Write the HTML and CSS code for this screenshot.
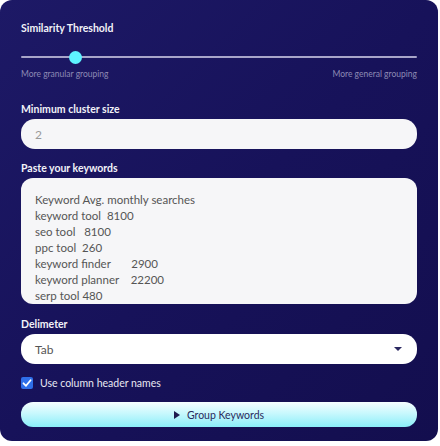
FILE: index.html
```html
<!DOCTYPE html>
<html>
<head>
<meta charset="utf-8">
<link rel="stylesheet" href="styles.css">
</head>
<body>
<div class="card">
  <div class="field">
    <div class="label">Similarity Threshold</div>
    <div class="slider">
      <div class="track"></div>
      <div class="thumb"></div>
    </div>
    <div class="hints"><span>More granular grouping</span><span>More general grouping</span></div>
  </div>
  <div class="field">
    <div class="label">Minimum cluster size</div>
    <div class="input placeholder">2</div>
  </div>
  <div class="field">
    <div class="label">Paste your keywords</div>
    <div class="textarea">
      <div>Keyword Avg. monthly searches</div>
      <div>keyword tool&nbsp; 8100</div>
      <div>seo tool&nbsp;&nbsp; 8100</div>
      <div>ppc tool&nbsp; 260</div>
      <div>keyword finder&nbsp;&nbsp;&nbsp;&nbsp;&nbsp;&nbsp; 2900</div>
      <div>keyword planner&nbsp;&nbsp;&nbsp; 22200</div>
      <div>serp tool 480</div>
    </div>
  </div>
  <div class="field">
    <div class="label">Delimeter</div>
    <div class="input select"><span>Tab</span><span class="caret"></span></div>
  </div>
  <div class="check-row">
    <span class="checkbox"><svg width="12" height="12" viewBox="0 0 12 12"><path d="M2.5 6.3 L5 8.8 L9.6 3.2" fill="none" stroke="#fff" stroke-width="1.8" stroke-linecap="round" stroke-linejoin="round"/></svg></span>
    <span class="check-label">Use column header names</span>
  </div>
  <div class="button"><span class="play"></span>Group Keywords</div>
</div>
</body>
</html>
```
FILE: styles.css
```css
html, body { margin: 0; padding: 0; background: #fff; }
body { font-family: "Lato", "Noto Sans", sans-serif; }
.card {
  width: 438px;
  height: 441px;
  box-sizing: border-box;
  border-radius: 12px;
  background: linear-gradient(135deg, #1d1966 0%, #17125a 50%, #130e4e 100%);
  padding: 21px 21px 0 21px;
  display: flex;
  flex-direction: column;
}
.label {
  color: #f2f2f8;
  font-size: 10.5px;
  font-weight: 700;
  line-height: 14px;
  margin-bottom: 3px;
}
.field { display: flex; flex-direction: column; }
.slider { position: relative; height: 20px; margin-top: 8px; }
.track {
  position: absolute; left: 0; right: 0; top: 10px;
  height: 2px; background: #a8a5c9; border-radius: 1px;
}
.thumb {
  position: absolute; left: 48px; top: 4.5px;
  width: 13px; height: 13px; border-radius: 50%;
  background: #5ef2ff;
}
.hints {
  display: flex; justify-content: space-between;
  color: #8d8ab4; font-size: 8.5px; line-height: 12px;
  margin-top: 2px; margin-bottom: 22px;
}
.input {
  height: 30px;
  border-radius: 14px;
  background: #f6f6f8;
  box-sizing: border-box;
  padding: 0 14px;
  display: flex; align-items: center;
  font-size: 12px;
  color: #555;
  margin-bottom: 12px;
}
.placeholder { color: #9a9a9a; }
.textarea {
  height: 126px;
  border-radius: 12px;
  background: #f6f6f8;
  box-sizing: border-box;
  padding: 14px 14px 0 14px;
  font-size: 11.5px;
  line-height: 16px;
  color: #555;
  overflow: hidden;
  margin-bottom: 13px;
}
.select { background: #fff; justify-content: space-between; padding-right: 14px; color: #555; margin-bottom: 12px; }
.caret {
  width: 0; height: 0;
  border-left: 4px solid transparent;
  border-right: 4px solid transparent;
  border-top: 4px solid #2a2760;
  margin-right: 1px;
}
.check-row { display: flex; align-items: center; height: 14px; margin-bottom: 12px; }
.checkbox {
  width: 12px; height: 12px; border-radius: 2px;
  background: #2f6fe9;
  display: flex; align-items: center; justify-content: center;
  margin-right: 7px;
}
.check-label { color: #e8e8f2; font-size: 10.5px; }
.button {
  height: 25px;
  border-radius: 12px;
  background: linear-gradient(180deg, #f6feff 0%, #c8f8fd 45%, #8aeef9 100%);
  display: flex; align-items: center; justify-content: center;
  color: #2a2a5c;
  font-size: 10.5px;
}
.play {
  width: 0; height: 0;
  border-top: 4px solid transparent;
  border-bottom: 4px solid transparent;
  border-left: 6px solid #1e1b4f;
  margin-right: 7px;
}
```
